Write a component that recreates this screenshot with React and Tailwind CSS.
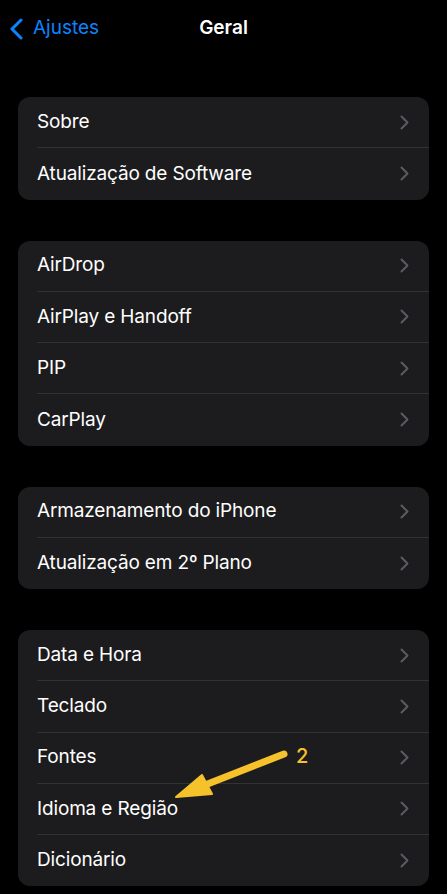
import React from 'react';

const groups = [
  ['Sobre', 'Atualização de Software'],
  ['AirDrop', 'AirPlay e Handoff', 'PIP', 'CarPlay'],
  ['Armazenamento do iPhone', 'Atualização em 2º Plano'],
  ['Data e Hora', 'Teclado', 'Fontes', 'Idioma e Região', 'Dicionário'],
];

const Chevron = () => (
  <svg width="9" height="15" viewBox="0 0 9 15" fill="none" className="shrink-0">
    <path d="M1.5 1.5L7.5 7.5L1.5 13.5" stroke="#5b5b60" strokeWidth="2" strokeLinecap="round" strokeLinejoin="round" />
  </svg>
);

const Row = ({ label, last }) => (
  <div className="flex h-[51.25px] items-center pl-[19px]">
    <div className={`flex h-full flex-1 items-center justify-between pr-[20px] ${last ? '' : 'border-b border-[#323234]'}`}>
      <span className="text-[19px] text-white tracking-[-0.15px]">{label}</span>
      <Chevron />
    </div>
  </div>
);

export default function App() {
  return (
    <div
      className="relative min-h-[894px] w-[447px] bg-black"
      style={{ fontFamily: 'Inter, "Liberation Sans", sans-serif' }}
    >
      {/* Nav bar */}
      <div className="relative flex h-[57px] items-center">
        <div className="flex items-center pl-[10px]">
          <svg width="13" height="22" viewBox="0 0 13 22" fill="none">
            <path d="M11 2L2 11L11 20" stroke="#0a84ff" strokeWidth="3" strokeLinecap="round" strokeLinejoin="round" />
          </svg>
          <span className="ml-[10px] text-[19px] text-[#0a84ff]">Ajustes</span>
        </div>
        <span className="absolute left-1/2 -translate-x-1/2 text-[19px] font-semibold text-white">Geral</span>
      </div>

      <div className="flex flex-col gap-[41px] px-[18px] pt-[40px]">
        {groups.map((g, i) => (
          <div key={i} className="overflow-hidden rounded-[12px] bg-[#1c1c1e]">
            {g.map((label, j) => (
              <Row key={label} label={label} last={j === g.length - 1} />
            ))}
          </div>
        ))}
      </div>

      {/* annotation */}
      <svg className="absolute left-0 top-0" width="447" height="894" viewBox="0 0 447 894">
        <line x1="284" y1="754" x2="205" y2="785" stroke="#f6c22c" strokeWidth="7" strokeLinecap="round" />
        <polygon points="176,797 202,775 212,794" fill="#f6c22c" stroke="#f6c22c" strokeWidth="2" strokeLinejoin="round" />
      </svg>
      <span className="absolute left-[296px] top-[741px] text-[20px] font-medium text-[#f6c22c]">2</span>
    </div>
  );
}
